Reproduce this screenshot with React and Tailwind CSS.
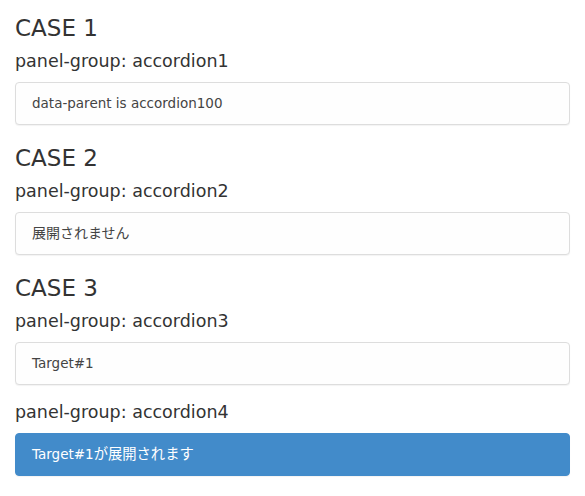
import React from 'react';

const font = {fontFamily: '"DejaVu Sans", "Noto Sans CJK JP", sans-serif'};

const Panel = ({children, primary}) => (
    <div
        className={`mx-[15px] h-[43px] flex items-center px-[16px] rounded border text-[13.5px] shadow-[0_1px_1px_rgba(0,0,0,0.05)] ${
            primary
                ? 'bg-[#428bca] border-[#428bca] text-white'
                : 'bg-[#fefefe] border-[#ddd] text-[#444]'
        }`}
    >
      {children}
    </div>
);

const Group = ({name, children, primary}) => (
    <div>
      <h4 className="px-[15px] h-[26px] mb-[8px] text-[17.5px] leading-[26px] text-[#333]">
        panel-group: {name}
      </h4>
      <Panel primary={primary}>{children}</Panel>
    </div>
);

const Case = ({title}) => (
    <h3 className="px-[15px] pt-[13px] h-[48px] text-[23px] leading-[30px] text-[#333]">
      {title}
    </h3>
);

export default function App() {
  return (
      <div className="bg-white w-[585px] h-[496px]" style={font}>
        <Case title="CASE 1"/>
        <Group name="accordion1">data-parent is accordion100</Group>
        <div className="h-[5px]"/>
        <Case title="CASE 2"/>
        <Group name="accordion2"><span className="text-[14px]">展開されません</span></Group>
        <div className="h-[5px]"/>
        <Case title="CASE 3"/>
        <Group name="accordion3">Target#1</Group>
        <div className="h-[14px]"/>
        <Group name="accordion4" primary>
          <span>Target#1</span>
          <span className="text-[14.3px]">が展開されます</span>
        </Group>
      </div>
  );
}
